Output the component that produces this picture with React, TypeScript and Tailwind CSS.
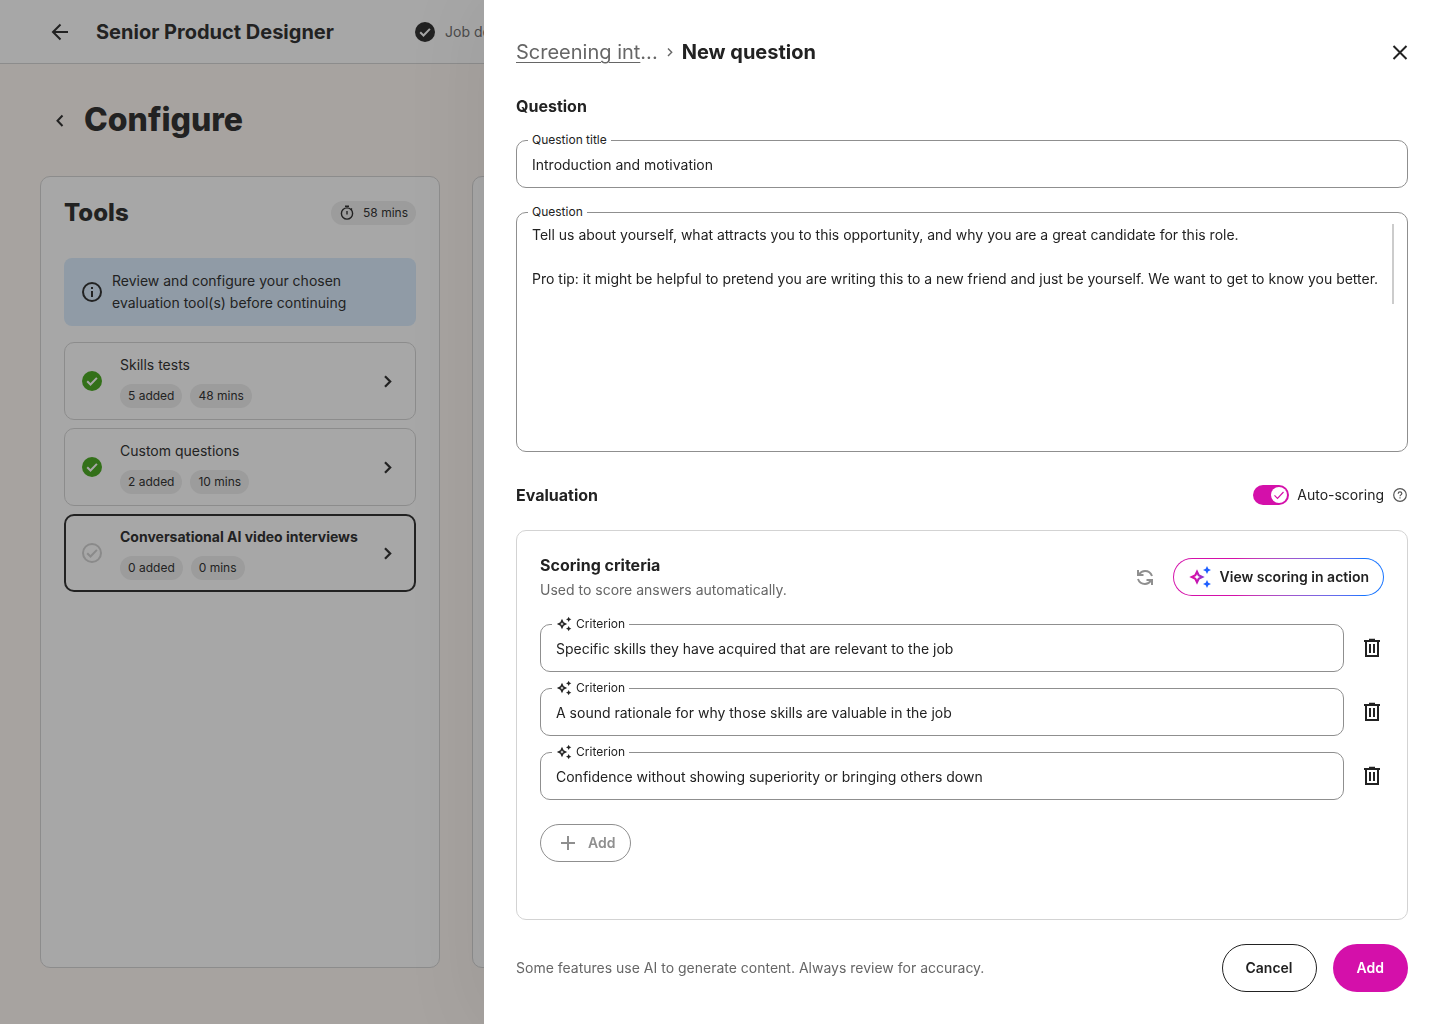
import React, { useState } from 'react';

interface IconProps {
  className?: string;
}

interface Tool {
  name: string;
  added: string;
  duration: string;
  done: boolean;
}

const tools: Tool[] = [
  { name: 'Skills tests', added: '5 added', duration: '48 mins', done: true },
  { name: 'Custom questions', added: '2 added', duration: '10 mins', done: true },
  { name: 'Conversational AI video interviews', added: '0 added', duration: '0 mins', done: false },
];

const initialCriteria = [
  'Specific skills they have acquired that are relevant to the job',
  'A sound rationale for why those skills are valuable in the job',
  'Confidence without showing superiority or bringing others down',
];

const initialQuestion =
  'Tell us about yourself, what attracts you to this opportunity, and why you are a great candidate for this role.\n\n' +
  'Pro tip: it might be helpful to pretend you are writing this to a new friend and just be yourself. We want to get to know you better.';

/* Icons */
const ArrowLeft = () => (
  <svg className="size-6" viewBox="0 0 24 24" fill="none" stroke="currentColor" strokeWidth="2">
    <path d="M20 12H5M12.5 4.5 5 12l7.5 7.5" />
  </svg>
);

const ChevronLeft = () => (
  <svg className="size-6" viewBox="0 0 24 24" fill="none" stroke="currentColor" strokeWidth="2">
    <path d="M14.5 7.500 9.500 12.800l5 5.200" />
  </svg>
);

const ChevronRight = () => (
  <svg className="size-6 shrink-0" viewBox="0 0 24 24" fill="none" stroke="currentColor" strokeWidth="2.2">
    <path d="M9 7.2 14.2 12.5 9 17.8" />
  </svg>
);

const CrumbChevron = () => (
  <svg className="size-4" viewBox="0 0 16 16" fill="none" stroke="currentColor" strokeWidth="1.4">
    <path d="M6 4.5 9.7 8.2 6 11.9" />
  </svg>
);

const CheckCircle = ({ className }: IconProps) => (
  <svg className={`size-6 shrink-0 ${className ?? ''}`} viewBox="0 0 24 24">
    <circle cx="12" cy="12" r="10" fill="currentColor" />
    <path d="m7.2 12.2 3.3 3.3 6.4-6.6" fill="none" stroke="#fff" strokeWidth="2" />
  </svg>
);

const CheckCircleOutline = ({ className }: IconProps) => (
  <svg className={`size-6 shrink-0 ${className ?? ''}`} viewBox="0 0 24 24" fill="none" stroke="currentColor" strokeWidth="2">
    <circle cx="12" cy="12" r="9" />
    <path d="m7.2 12.2 3.3 3.3 6.4-6.6" />
  </svg>
);

const Timer = () => (
  <svg className="size-4" viewBox="0 0 16 16" fill="none" stroke="currentColor" strokeWidth="1.4">
    <circle cx="8" cy="8.500" r="5.6" />
    <path d="M6 1.3h4M8 6v3.4M11.8 4.700l1.2-1.2" />
  </svg>
);

const Info = () => (
  <svg className="size-6 shrink-0" viewBox="0 0 24 24" fill="none" stroke="currentColor" strokeWidth="2">
    <circle cx="12" cy="12" r="9" />
    <path d="M12 11v6M12 7v2" />
  </svg>
);

const Close = () => (
  <svg className="size-6" viewBox="0 0 24 24" fill="none" stroke="currentColor" strokeWidth="2">
    <path d="m5.5 6 13 13M18.5 6l-13 13" />
  </svg>
);

const Refresh = () => (
  <svg className="size-6" viewBox="0 0 24 24" fill="none" stroke="currentColor" strokeWidth="2">
    <path d="M6 9.500C7.500 7.200 9.600 6 12 6c3.200 0 5.900 1.900 7 5M18 15.500C16.500 17.800 14.400 19 12 19c-3.200 0-5.900-1.900-7-5" />
    <path d="M5 5v5h5.500M19 20v-5h-5.500" />
  </svg>
);

const Sparkles = ({ className }: IconProps) => (
  <svg className={className} viewBox="0 0 24 24" fill="currentColor">
    <path
      fillRule="evenodd"
      d="M9 4.300 11.500 9.500 16.700 12 11.500 14.500 9 19.700 6.500 14.500 1.300 12 6.500 9.500ZM9 9.200 8.100 11.100 6.200 12 8.100 12.900 9 14.800 9.900 12.900 11.800 12 9.900 11.100Z"
    />
    <path d="m19 1 1.300 2.700L23 5l-2.700 1.300L19 9l-1.300-2.700L15 5l2.700-1.300ZM19 15l1.300 2.700L23 19l-2.700 1.300L19 23l-1.300-2.700L15 19l2.700-1.300Z" />
  </svg>
);

const GradientSparkles = () => (
  <svg className="size-6" viewBox="0 0 24 24">
    <defs>
      <linearGradient id="sparkle" x1="0" x2="1" y1="0" y2="0">
        <stop offset="0.4" stopColor="#d410aa" />
        <stop offset="1" stopColor="#7a3fd8" />
      </linearGradient>
    </defs>
    <path
      fill="url(#sparkle)"
      fillRule="evenodd"
      d="M9 4.300 11.500 9.500 16.700 12 11.500 14.500 9 19.700 6.500 14.500 1.300 12 6.500 9.500ZM9 9.200 8.100 11.100 6.200 12 8.100 12.900 9 14.800 9.900 12.900 11.800 12 9.900 11.100Z"
    />
    <path
      fill="#1f5fff"
      d="m19 1 1.300 2.700L23 5l-2.700 1.300L19 9l-1.300-2.700L15 5l2.700-1.300ZM19 15l1.300 2.700L23 19l-2.700 1.300L19 23l-1.300-2.700L15 19l2.700-1.300Z"
    />
  </svg>
);

const Trash = () => (
  <svg className="size-6" viewBox="0 0 24 24" fill="none" stroke="currentColor" strokeWidth="2">
    <path d="M4 5h16M9 3.800h6M6 5v15h12V5" />
    <path d="M10 8v9M14 8v9" />
  </svg>
);

const Plus = () => (
  <svg className="size-6" viewBox="0 0 24 24" fill="none" stroke="currentColor" strokeWidth="2">
    <path d="M12 5v14M5 12h14" />
  </svg>
);

const Help = () => (
  <svg className="size-4" viewBox="0 0 16 16" fill="none" stroke="currentColor" strokeWidth="1.2">
    <circle cx="8" cy="8" r="6.300" />
    <path d="M6.200 6.700c0-1.100.8-1.800 1.800-1.800s1.800.7 1.800 1.600c0 1.300-1.800 1.400-1.800 2.700M8 10.200v1.300" />
  </svg>
);

const Chip: React.FC<{ children: React.ReactNode }> = ({ children }) => (
  <span className="inline-flex h-6 items-center gap-2 rounded-full bg-[#ededed] px-2 text-xs">{children}</span>
);

const ToolRow: React.FC<{ tool: Tool; selected: boolean; onSelect: () => void }> = ({ tool, selected, onSelect }) => (
  <button
    onClick={onSelect}
    className={`flex w-full items-center gap-4 rounded-[10px] text-left ${
      selected ? 'border-2 border-[#222] px-3.5 py-2.5' : 'border border-[#d3d3d3] px-[15px] py-[11px]'
    }`}
  >
    {tool.done ? <CheckCircle className="text-[#3ea413]" /> : <CheckCircleOutline className="text-[#cfcfcf]" />}
    <span className="flex flex-1 flex-col gap-2">
      <span className={`text-sm leading-[22px] ${selected ? 'font-bold' : ''}`}>{tool.name}</span>
      <span className="flex gap-2">
        <Chip>{tool.added}</Chip>
        <Chip>{tool.duration}</Chip>
      </span>
    </span>
    <ChevronRight />
  </button>
);

interface TextFieldProps {
  id: string;
  label: string;
  value: string;
  onChange: (value: string) => void;
  sparkles?: boolean;
}

const TextField: React.FC<TextFieldProps> = ({ id, label, value, onChange, sparkles }) => (
  <div className="relative flex-1">
    <label htmlFor={id} className="absolute -top-2 left-3 flex h-4 items-center gap-1 bg-white px-1 text-xs">
      {sparkles && <Sparkles className="size-4" />}
      {label}
    </label>
    <input
      id={id}
      type="text"
      value={value}
      onChange={(e) => onChange(e.target.value)}
      className="block h-12 w-full rounded-[10px] border border-[#8f8f8f] px-[15px] text-sm outline-none"
    />
  </div>
);

const App: React.FC = () => {
  const [selectedTool, setSelectedTool] = useState(2);
  const [title, setTitle] = useState('Introduction and motivation');
  const [question, setQuestion] = useState(initialQuestion);
  const [autoScoring, setAutoScoring] = useState(true);
  const [criteria, setCriteria] = useState(initialCriteria);

  const updateCriterion = (index: number, value: string) => {
    setCriteria(criteria.map((c, i) => (i === index ? value : c)));
  };

  const removeCriterion = (index: number) => {
    setCriteria(criteria.filter((_, i) => i !== index));
  };

  return (
    <div className="min-h-screen bg-[#fff8f3] font-['Inter',sans-serif] text-[#222]">
      <div className="flex min-h-screen flex-col">
        <header className="flex h-16 items-center border-b border-[#d3d3d3] bg-white px-12">
          <button aria-label="Back">
            <ArrowLeft />
          </button>
          <h1 className="ml-6 w-[317px] text-xl font-bold">Senior Product Designer</h1>
          <div className="flex items-center gap-2 text-sm whitespace-nowrap text-[#666]">
            <CheckCircle className="text-[#222]" />
            Job details
          </div>
        </header>

        <main className="flex flex-1 flex-col px-10 pb-14">
          <div className="flex h-28 items-center gap-3 px-2">
            <button aria-label="Previous step">
              <ChevronLeft />
            </button>
            <h2 className="text-[32px] leading-10 font-extrabold">Configure</h2>
          </div>

          <div className="flex flex-1 gap-8">
            <section className="w-[400px] rounded-[10px] border border-[#d3d3d3] bg-white p-[23px]">
              <div className="flex h-[26px] items-center justify-between">
                <h3 className="text-2xl font-extrabold">Tools</h3>
                <Chip>
                  <Timer />
                  58 mins
                </Chip>
              </div>
              <div className="mt-8 flex items-center gap-2 rounded-lg bg-[#d9ecfe] px-4 py-3 text-sm leading-[22px]">
                <Info />
                <p className="w-60">Review and configure your chosen evaluation tool(s) before continuing</p>
              </div>
              <div className="mt-4 flex flex-col gap-2">
                {tools.map((tool, i) => (
                  <ToolRow key={tool.name} tool={tool} selected={i === selectedTool} onSelect={() => setSelectedTool(i)} />
                ))}
              </div>
            </section>
            <section className="flex-1 rounded-[10px] border border-[#d3d3d3] bg-white" />
          </div>
        </main>
      </div>

      {/* Backdrop */}
      <div className="fixed inset-0 bg-[#222]/40" />

      {/* New question drawer */}
      <aside
        role="dialog"
        aria-label="New question"
        className="fixed inset-y-0 right-0 left-[484px] flex flex-col overflow-y-auto bg-white p-8 shadow-[0_0_80px_rgba(0,0,0,0.08)]"
      >
        <div className="flex h-10 shrink-0 items-center justify-between">
          <nav className="flex items-center gap-1 text-xl text-[#666]">
            <span>
              <a href="#screening" className="underline decoration-1 underline-offset-3">Screening int</a>...
            </span>
            <CrumbChevron />
            <h2 className="font-bold text-[#222]">New question</h2>
          </nav>
          <button aria-label="Close" className="-mr-1">
            <Close />
          </button>
        </div>

        <h3 className="mt-5 mb-5 text-base leading-7 font-bold">Question</h3>
        <div className="flex shrink-0">
          <TextField id="question-title" label="Question title" value={title} onChange={setTitle} />
        </div>
        <div className="relative mt-6 shrink-0">
          <label htmlFor="question-body" className="absolute -top-2 left-3 flex h-4 items-center bg-white px-1 text-xs">
            Question
          </label>
          <textarea
            id="question-body"
            value={question}
            onChange={(e) => setQuestion(e.target.value)}
            className="block h-60 w-full resize-none rounded-[10px] border border-[#8f8f8f] px-[15px] py-[11px] text-sm leading-[22px] outline-none"
          />
          <div className="absolute top-3 right-3.5 h-20 w-0.5 bg-[#ccc]" />
        </div>

        <div className="mt-7 flex h-[30px] shrink-0 items-center justify-between">
          <h3 className="text-base font-bold">Evaluation</h3>
          <div className="flex items-center gap-2">
            <div className="relative flex h-5 w-9">
              <input
                id="auto-scoring"
                type="checkbox"
                role="switch"
                checked={autoScoring}
                onChange={(e) => setAutoScoring(e.target.checked)}
                className="peer h-5 w-9 appearance-none rounded-full bg-[#8f8f8f] checked:bg-[#d410aa]"
              />
              <span className="pointer-events-none absolute top-0.5 left-0.5 flex size-4 items-center justify-center rounded-full bg-white peer-checked:left-[18px]">
                <svg className="size-4 text-[#d410aa]" viewBox="0 0 16 16" fill="none" stroke="currentColor" strokeWidth="1.2">
                  <path d="m3.500 8.300 3 3 6-6.300" />
                </svg>
              </span>
            </div>
            <label htmlFor="auto-scoring" className="text-sm">Auto-scoring</label>
            <button aria-label="About auto-scoring" className="text-[#555]">
              <Help />
            </button>
          </div>
        </div>

        <section className="mt-5 flex-1 rounded-[10px] border border-[#d3d3d3] p-[23px]">
          <div className="flex items-center gap-4">
            <div className="flex-1">
              <h4 className="text-base leading-[22px] font-bold">Scoring criteria</h4>
              <p className="mt-1 text-sm leading-5 text-[#666]">Used to score answers automatically.</p>
            </div>
            <button aria-label="Regenerate criteria" className="text-[#8f8f8f]">
              <Refresh />
            </button>
            <button className="flex h-[38px] rounded-full bg-linear-to-r from-[#d410aa] from-30% to-[#1673ff] to-90% p-px text-sm font-semibold">
              <span className="flex h-full items-center gap-2 rounded-full bg-white px-3.5">
                <GradientSparkles />
                View scoring in action
              </span>
            </button>
          </div>

          <div className="mt-6 flex flex-col gap-4">
            {criteria.map((criterion, i) => (
              <div key={i} className="flex items-center gap-4">
                <TextField
                  id={`criterion-${i}`}
                  label="Criterion"
                  value={criterion}
                  onChange={(value) => updateCriterion(i, value)}
                  sparkles
                />
                <button aria-label="Delete criterion" onClick={() => removeCriterion(i)}>
                  <Trash />
                </button>
              </div>
            ))}
          </div>

          <button
            onClick={() => setCriteria([...criteria, ''])}
            className="mt-6 flex h-[38px] items-center gap-2 rounded-full border border-[#8f8f8f] px-[15px] text-sm font-semibold text-[#8f8f8f]"
          >
            <Plus />
            Add
          </button>
        </section>

        <footer className="mt-6 flex h-12 shrink-0 items-center gap-4">
          <p className="flex-1 text-sm text-[#666]">Some features use AI to generate content. Always review for accuracy.</p>
          <button className="h-12 rounded-full border border-[#222] px-[23px] text-sm font-semibold">Cancel</button>
          <button className="h-12 rounded-full bg-[#d410aa] px-6 text-sm font-semibold text-white">Add</button>
        </footer>
      </aside>
    </div>
  );
};

export default App;
